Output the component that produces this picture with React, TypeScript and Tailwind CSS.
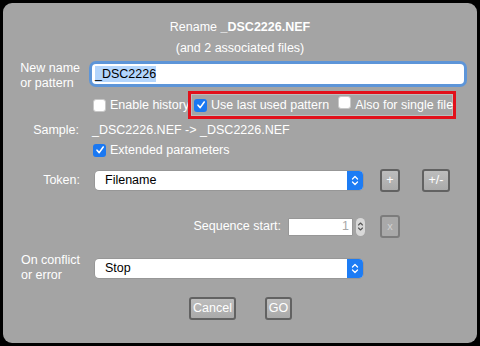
import React from "react";

const font = { fontFamily: "'Liberation Sans', Arial, sans-serif" };

function Check({ checked }: { checked?: boolean }) {
  return checked ? (
    <span className="inline-flex h-[13px] w-[13px] shrink-0 items-center justify-center rounded-[3px] bg-[#1a78f2]">
      <svg width="10" height="10" viewBox="0 0 10 10">
        <path d="M2 5.2 L4.2 7.6 L8.2 2" fill="none" stroke="white" strokeWidth="1.6" strokeLinecap="round" strokeLinejoin="round" />
      </svg>
    </span>
  ) : (
    <span className="inline-block h-[13px] w-[13px] shrink-0 rounded-[3px] border border-[#c8c8c8] bg-white" />
  );
}

function SelectBox({ value }: { value: string }) {
  return (
    <div className="flex h-[19px] w-[268px] items-stretch rounded-[4px] bg-white shadow-[0_0_0_0.5px_#8a8a8a]">
      <div className="flex-1 pl-[10px] leading-[19px] text-black">{value}</div>
      <div className="flex w-[16px] items-center justify-center rounded-r-[4px] bg-[#1d7cf4]">
        <svg width="8" height="13" viewBox="0 0 8 13">
          <path d="M1.5 5 L4 2.5 L6.5 5 M1.5 8 L4 10.5 L6.5 8" fill="none" stroke="white" strokeWidth="1.3" strokeLinecap="round" strokeLinejoin="round" />
        </svg>
      </div>
    </div>
  );
}

function Btn({ children, w, h = 23, disabled }: { children: React.ReactNode; w: number; h?: number; disabled?: boolean }) {
  return (
    <div
      className={
        "flex items-center justify-center rounded-[3px] border-2 " +
        (disabled
          ? "border-[#7c7c7c] bg-[#a9a9a9] text-[#d0d0d0]"
          : "border-[#626262] bg-gradient-to-b from-[#bdbdbd] to-[#aaaaaa] text-white")
      }
      style={{ width: w, height: h }}
    >
      {children}
    </div>
  );
}

export default function App() {
  return (
    <div className="h-[346px] w-[480px] whitespace-nowrap bg-black p-[3px]" style={font}>
      <div className="flex h-full flex-col rounded-[9px] bg-[#a4a4a4] text-[12.5px] text-white">
        <div className="mt-[14px] h-[20px] text-center leading-[20px]">
          Rename <span className="font-bold">_DSC2226.NEF</span>
        </div>
        <div className="mt-[1px] h-[20px] text-center leading-[20px]">(and 2 associated files)</div>

        {/* new name */}
        <div className="mt-[2px] flex h-[30px] items-start">
          <div className="flex w-[77px] justify-end">
            <div className="mt-[1px] leading-[15px]">
              New name
              <br />
              or pattern
            </div>
          </div>
          <div className="ml-[12px] mt-[4px] flex h-[20px] w-[372px] items-center rounded-[4px] bg-white pl-[3px] shadow-[0_0_0_3px_#5d95d8]">
            <span className="bg-[#b3d5fc] leading-[16px] text-black">_DSC2226</span>
          </div>
        </div>

        {/* checkboxes */}
        <div className="mt-[1px] flex h-[28px] items-center">
          <div className="ml-[90px] flex w-[95px] items-center gap-[4px]">
            <Check />
            <span>Enable history</span>
          </div>
          <div className="flex h-[28px] w-[268px] items-center border-[3px] border-[#e2101a]">
            <div className="flex h-full w-full items-center border border-[#bcbcbc] pl-[2px]">
              <Check checked />
              <span className="ml-[4px]">Use last used pattern</span>
              <span className="ml-[9px]">
                <Check />
              </span>
              <span className="ml-[4px]">Also for single file</span>
            </div>
          </div>
        </div>

        {/* sample */}
        <div className="mt-[3px] flex h-[16px] items-center">
          <div className="flex w-[76px] justify-end">Sample:</div>
          <div className="ml-[13px]">_DSC2226.NEF -&gt; _DSC2226.NEF</div>
        </div>

        {/* extended */}
        <div className="mt-[4px] flex h-[16px] items-center">
          <div className="ml-[90px] flex items-center gap-[4px]">
            <Check checked />
            <span>Extended parameters</span>
          </div>
        </div>

        {/* token */}
        <div className="mt-[11px] flex h-[23px] items-center">
          <div className="flex w-[77px] justify-end">Token:</div>
          <div className="ml-[15px]">
            <SelectBox value="Filename" />
          </div>
          <div className="ml-[17px]">
            <Btn w={20}>+</Btn>
          </div>
          <div className="ml-[22px]">
            <Btn w={28}>+/-</Btn>
          </div>
        </div>

        {/* sequence */}
        <div className="mt-[23px] flex h-[23px] items-center">
          <div className="flex w-[278px] justify-end">Sequence start:</div>
          <div className="ml-[8px] flex h-[16px] w-[63px] items-center justify-end bg-white pr-[3px] text-[#a8a8a8] shadow-[0_0_0_0.5px_#8a8a8a]">
            1
          </div>
          <div className="ml-[4px] flex h-[18px] w-[9px] items-center justify-center rounded-full bg-[#d8d8d8]">
            <svg width="7" height="13" viewBox="0 0 7 13">
              <path d="M1.5 5 L3.5 3 L5.5 5 M1.5 8 L3.5 10 L5.5 8" fill="none" stroke="#555" strokeWidth="1.1" strokeLinecap="round" strokeLinejoin="round" />
            </svg>
          </div>
          <div className="ml-[15px]">
            <Btn w={20} disabled>
              <span className="text-[11px]">x</span>
            </Btn>
          </div>
        </div>

        {/* conflict */}
        <div className="mt-[14px] flex h-[30px] items-start">
          <div className="flex w-[77px] justify-end">
            <div className="mt-[1px] leading-[15px]">
              On conflict
              <br />
              or error
            </div>
          </div>
          <div className="ml-[15px] mt-[7px]">
            <SelectBox value="Stop" />
          </div>
        </div>

        {/* buttons */}
        <div className="mt-[15px] flex items-center">
          <div className="ml-[186px]">
            <Btn w={47}>Cancel</Btn>
          </div>
          <div className="ml-[29px]">
            <Btn w={27}>GO</Btn>
          </div>
        </div>
      </div>
    </div>
  );
}
